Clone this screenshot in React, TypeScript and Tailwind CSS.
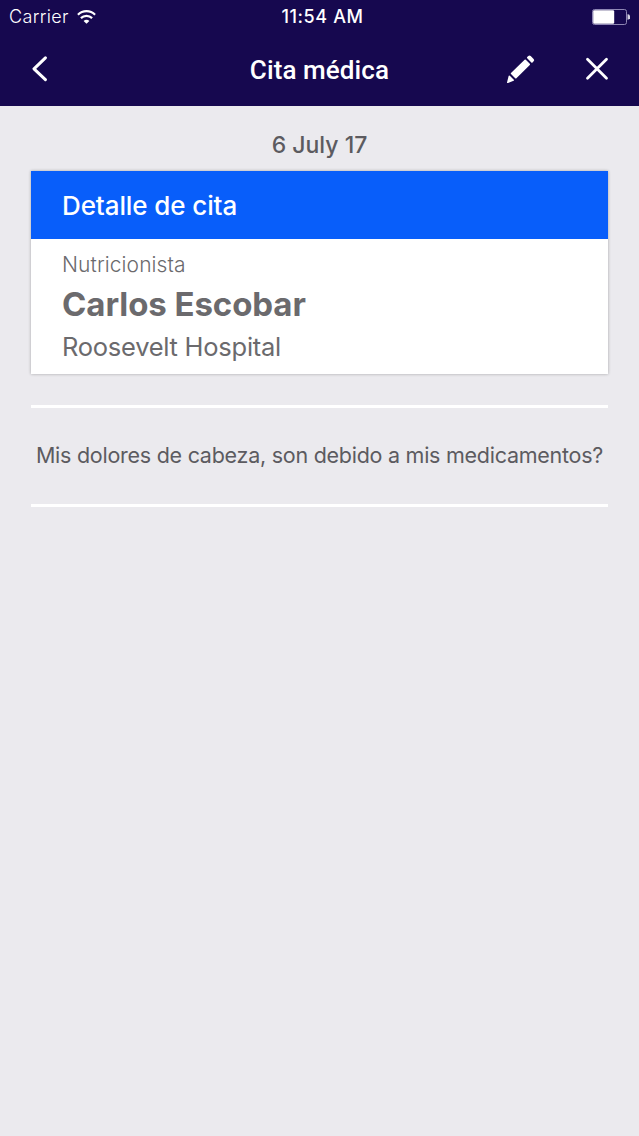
function WifiIcon() {
	return (
		<svg className="h-[14px] w-[19px]" viewBox="0 0 19 14" fill="none" stroke="white" strokeWidth="2.2">
			<path d="M0.9 4.7a12.3 12.3 0 0 1 17.2 0" />
			<path d="M3.9 8.1a8 8 0 0 1 11.2 0" />
			<path d="M9.5 13.8 6.6 10.9a4 4 0 0 1 5.8 0Z" fill="white" stroke="none" />
		</svg>
	);
}

function BatteryIcon() {
	return (
		<svg className="h-[16px] w-[38px]" viewBox="0 0 38 16" fill="none">
			<rect x="0.5" y="0.5" width="34" height="15" rx="2" stroke="#8f87b4" />
			<rect x="1.2" y="1.2" width="21" height="13.6" rx="1.2" fill="white" />
			<path d="M35.5 5.3a2.7 2.7 0 0 1 0 5.4Z" fill="#d5d2e2" />
		</svg>
	);
}

function BackIcon() {
	return (
		<svg className="h-[26px] w-4" viewBox="0 0 16 26" fill="none" stroke="white" strokeWidth="3" strokeLinecap="round">
			<path d="M13.4 1.8 2 12.8l11.4 10.8" strokeLinejoin="round" />
		</svg>
	);
}

function PencilIcon() {
	return (
		<svg className="h-[30px] w-[30px]" viewBox="0 0 30 30" fill="white">
			<path d="M1 28.4 2.6 21.9q.4-.9 1.2-.2l4 4q.6.7-.2 1.1L2 28.9q-1 .3-1-.5Z" />
			<path d="M5 18.9 18.6 5.7q.6-.6 1.2 0l4 4q.6.6 0 1.2L10.4 24.3q-.6.6-1.2 0L5 20.1q-.6-.6 0-1.2Z" />
			<path d="m21.2 3.1 1.1-1.1q1.2-1.2 2.4 0L27.6 4.9q1.2 1.2 0 2.4l-1.1 1.1q-.6.6-1.2 0l-4.1-4.1q-.6-.6 0-1.2Z" />
		</svg>
	);
}

function CloseIcon() {
	return (
		<svg className="h-6 w-6" viewBox="0 0 24 24" fill="none" stroke="white" strokeWidth="2.8" strokeLinecap="round">
			<path d="m2.5 2.3 19 19M21.5 2.3l-19 19" />
		</svg>
	);
}

function Header() {
	return (
		<header className="h-[106px] bg-[#16084f] text-white">
			{/* Status bar */}
			<div className="grid h-8 grid-cols-3 items-center pr-[9px] pl-[9px]">
				<div className="flex items-center gap-2 text-[18px] leading-8 font-light">
					<span className="tracking-[0.35px]">Carrier</span>
					<WifiIcon />
				</div>
				<span className="pt-px pl-[6px] text-center text-[18px] leading-8 font-medium tracking-[0.6px]">11:54 AM</span>
				<div className="flex justify-end">
					<BatteryIcon />
				</div>
			</div>

			{/* Navigation */}
			<div className="grid h-[74px] grid-cols-3 items-center pr-[30px] pl-8">
				<BackIcon />
				<h1 className="pt-px pr-[2px] text-center font-['Roboto',sans-serif] text-[26px] leading-8 font-medium tracking-[0.1px]">
					Cita médica
				</h1>
				<div className="flex items-center justify-end gap-[49px]">
					<PencilIcon />
					<CloseIcon />
				</div>
			</div>
		</header>
	);
}

export default function App() {
	return (
		<div className="min-h-[1136px] bg-[#ebeaee] font-['Inter',sans-serif] text-[#5c5b60]">
			<Header />
			<main className="pr-[31px] pl-[31px]">
				<p className="pt-[23px] text-center text-[23px] leading-8 font-medium">6 July 17</p>

				{/* Appointment card */}
				<section className="mt-[10px] h-[203px] bg-white shadow-[0_0_3px_rgba(0,0,0,0.3)]">
					<h2 className="h-[68px] bg-[#085efa] pl-[31px] text-[26px] leading-[70px] font-medium tracking-[-0.1px] text-white">
						Detalle de cita
					</h2>
					<div className="pl-[31px] text-[#6b6a6d]">
						<p className="pt-[10px] text-[21px] leading-8 font-light tracking-[0.1px]">Nutricionista</p>
						<p className="text-[33px] leading-[46px] font-bold tracking-[-0.08px]">Carlos Escobar</p>
						<p className="text-[25.5px] leading-10 font-normal tracking-[-0.26px]">Roosevelt Hospital</p>
					</div>
				</section>

				{/* Question */}
				<p className="mt-[31px] h-[102px] border-y-[3px] border-white text-center text-[21.5px] leading-[95px] tracking-[-0.26px] whitespace-nowrap">
					Mis dolores de cabeza, son debido a mis medicamentos?
				</p>
			</main>
		</div>
	);
}
